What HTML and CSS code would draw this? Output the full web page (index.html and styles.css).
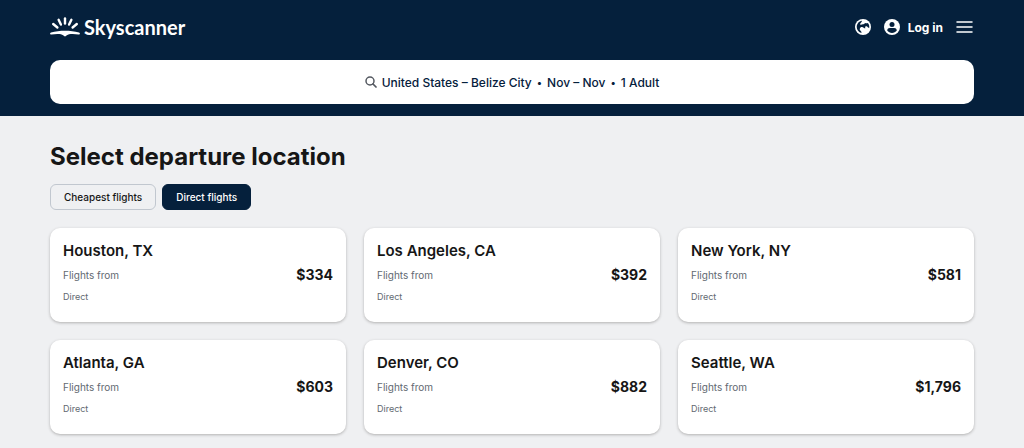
FILE: index.html
```html
<!DOCTYPE html>
<html lang="en">
<head>
    <meta charset="UTF-8">
    <meta name="viewport" content="width=device-width, initial-scale=1.0">
    <title>Select departure location | Skyscanner</title>
    <link rel="stylesheet" href="styles.css">
</head>
<body>
    <header class="header">
        <div class="topbar">
            <a class="logo" href="#">
                <svg class="logo-mark" viewBox="0 0 30 20" aria-hidden="true">
                    <g stroke="currentColor" stroke-width="2.4" stroke-linecap="round">
                        <path d="M15 1.400V6.600"/>
                        <path d="M8.600 2.800l2.300 4.800"/>
                        <path d="M21.400 2.800l-2.300 4.800"/>
                        <path d="M3.200 7l4.200 3.500"/>
                        <path d="M26.800 7l-4.200 3.500"/>
                    </g>
                    <path fill="currentColor" d="M1 15.400C5.500 14.400 10 13.700 15 13.700s9.500.7 14 1.700c1.400.4 1.200 2.300-.4 2.100-3-.4-5.500-.7-8-.4-2.200.2-3.500 1-4.700 2-.6.500-1.200.5-1.800 0-1.200-1-2.500-1.800-4.700-2-2.500-.3-5 0-8 .4-1.600.2-1.800-1.700-.4-2.100z"/>
                </svg>
                <span class="logo-name">Skyscanner</span>
            </a>
            <nav class="actions">
                <button class="icon-button" type="button" aria-label="Regional settings">
                    <svg width="16" height="16" viewBox="0 0 16 16" aria-hidden="true">
                        <circle cx="8" cy="8" r="8" fill="#fff"/>
                        <path fill="#05203c" d="M7 1.700C4 2 1.700 4.700 1.700 8c0 2.900 2 5.400 4.800 6.100.1-1-.2-1.700-.9-2.400-.8-.7-1-1.400-.7-2.300.3-1 1-1.500 2-1.500.8 0 1.500.4 2 1 .5.500 1 .6 1.500.3-.4-.7-.4-1.300 0-1.700.5-.5 1.200-.4 1.700 0 .7.600 1.200 1.300 2.100 1.500.3-1.900-.1-3.700-1.400-5-.9.500-1.700.4-2.500 0-.8.600-1.400 1.200-2.400 1.300-.8.100-1.400.5-2.200.4-.7-.1-.8-.7-.4-1.200.6-.8 1.600-1.500 1.700-2.800z"/>
                    </svg>
                </button>
                <button class="login" type="button">
                    <svg width="16" height="16" viewBox="0 0 16 16" aria-hidden="true">
                        <circle cx="8" cy="8" r="8" fill="#fff"/>
                        <circle cx="8" cy="5.400" r="2.500" fill="#05203c"/>
                        <path fill="#05203c" d="M3.200 11.600c0-1.700 1.200-2.500 2.700-2.500h4.200c1.500 0 2.700.8 2.700 2.500-1.200 1.600-2.900 2.500-4.800 2.500s-3.600-.9-4.800-2.500z"/>
                    </svg>
                    Log in
                </button>
                <button class="icon-button" type="button" aria-label="Menu">
                    <svg width="18" height="14" viewBox="0 0 18 14" aria-hidden="true">
                        <path stroke="#fff" stroke-width="1.500" stroke-linecap="round" d="M1 2h15M1 7h15M1 12h15"/>
                    </svg>
                </button>
            </nav>
        </div>

        <button class="search" type="button">
            <svg width="12" height="12" viewBox="0 0 12 12" aria-hidden="true">
                <circle cx="5" cy="5" r="4" fill="none" stroke="#545860" stroke-width="1.500"/>
                <path stroke="#545860" stroke-width="1.700" stroke-linecap="round" d="M8 8l3 3"/>
            </svg>
            <span>United States – Belize City</span>
            <span class="dot">•</span>
            <span>Nov – Nov</span>
            <span class="dot">•</span>
            <span>1 Adult</span>
        </button>
    </header>

    <main class="content">
        <h1>Select departure location</h1>

        <div class="filters">
            <button class="chip" type="button" aria-pressed="false">Cheapest flights</button>
            <button class="chip chip-active" type="button" aria-pressed="true">Direct flights</button>
        </div>

        <div class="cards">
            <a class="card" href="#">
                <h2>Houston, TX</h2>
                <p class="from">Flights from</p>
                <p class="stops">Direct</p>
                <span class="price">$334</span>
            </a>
            <a class="card" href="#">
                <h2>Los Angeles, CA</h2>
                <p class="from">Flights from</p>
                <p class="stops">Direct</p>
                <span class="price">$392</span>
            </a>
            <a class="card" href="#">
                <h2>New York, NY</h2>
                <p class="from">Flights from</p>
                <p class="stops">Direct</p>
                <span class="price">$581</span>
            </a>
            <a class="card" href="#">
                <h2>Atlanta, GA</h2>
                <p class="from">Flights from</p>
                <p class="stops">Direct</p>
                <span class="price">$603</span>
            </a>
            <a class="card" href="#">
                <h2>Denver, CO</h2>
                <p class="from">Flights from</p>
                <p class="stops">Direct</p>
                <span class="price">$882</span>
            </a>
            <a class="card" href="#">
                <h2>Seattle, WA</h2>
                <p class="from">Flights from</p>
                <p class="stops">Direct</p>
                <span class="price">$1,796</span>
            </a>
        </div>
    </main>
</body>
</html>
```

FILE: styles.css
```css
* {
    margin: 0;
    padding: 0;
    box-sizing: border-box;
}

body {
    font-family: Inter, "Liberation Sans", sans-serif;
    background: #eff0f2;
    color: #161616;
}

button {
    font-family: inherit;
    border: none;
    background: none;
    cursor: pointer;
}

a {
    color: inherit;
    text-decoration: none;
}

.header {
    background: #05203c;
    color: white;
    padding: 12px 50px;
}

.topbar {
    display: flex;
    align-items: center;
    justify-content: space-between;
    height: 30px;
    margin-bottom: 18px;
}

.logo {
    display: flex;
    align-items: center;
    gap: 4px;
}

.logo-mark {
    width: 30px;
    height: 20px;
}

.logo-name {
    font-family: Lato, sans-serif;
    font-size: 20px;
    font-weight: 700;
    line-height: 24px;
}

.actions {
    display: flex;
    align-items: center;
    gap: 13px;
}

.icon-button {
    display: flex;
}

.login {
    display: flex;
    align-items: center;
    gap: 8px;
    color: white;
    font-size: 12px;
    font-weight: 700;
}

.search {
    display: flex;
    align-items: center;
    justify-content: center;
    gap: 5px;
    width: 100%;
    height: 44px;
    background: white;
    border-radius: 10px;
    color: #05203c;
    font-size: 12px;
    font-weight: 500;
}

.dot {
    font-size: 10px;
}

.content {
    padding: 26px 50px 14px;
}

h1 {
    font-size: 24px;
    font-weight: 700;
    line-height: 30px;
    margin-bottom: 12px;
}

.filters {
    display: flex;
    gap: 6px;
    margin-bottom: 18px;
}

.chip {
    height: 26px;
    padding: 0 13px;
    border: 1px solid #c1c7cf;
    border-radius: 6px;
    color: #161616;
    font-size: 10px;
    font-weight: 500;
}

.chip-active {
    background: #05203c;
    border-color: #05203c;
    color: white;
}

.cards {
    display: grid;
    grid-template-columns: repeat(3, 1fr);
    gap: 18px;
}

.card {
    display: grid;
    grid-template-columns: 1fr auto;
    grid-template-rows: 20px 20px 14px;
    row-gap: 4px;
    align-items: center;
    padding: 13px 13px 19px;
    background: white;
    border-radius: 10px;
    box-shadow: 0 1px 3px rgba(37, 32, 31, 0.3);
}

.card h2 {
    grid-column: 1 / -1;
    font-size: 15px;
    font-weight: 600;
    line-height: 20px;
}

.from {
    color: #626971;
    font-size: 10px;
}

.stops {
    grid-row: 3;
    color: #626971;
    font-size: 9px;
}

.price {
    grid-column: 2;
    grid-row: 2;
    font-size: 14px;
    font-weight: 700;
    line-height: 18px;
}
```
